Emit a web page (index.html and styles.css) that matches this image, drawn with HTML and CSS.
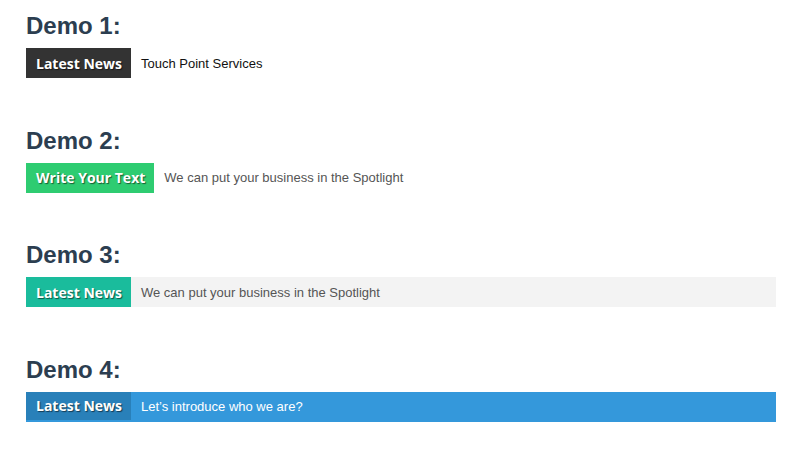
FILE: index.html
```html
<!DOCTYPE html>
<html>
<head>
<meta charset="utf-8">
<link rel="stylesheet" href="styles.css">
</head>
<body>
<div class="page">
  <section class="demo">
    <h2 class="title">Demo 1:</h2>
    <div class="ticker">
      <span class="label label-dark">Latest News</span>
      <span class="text text-black">Touch Point Services</span>
    </div>
  </section>
  <section class="demo">
    <h2 class="title">Demo 2:</h2>
    <div class="ticker">
      <span class="label label-green">Write Your Text</span>
      <span class="text">We can put your business in the Spotlight</span>
    </div>
  </section>
  <section class="demo">
    <h2 class="title">Demo 3:</h2>
    <div class="ticker ticker-grey">
      <span class="label label-teal">Latest News</span>
      <span class="text">We can put your business in the Spotlight</span>
    </div>
  </section>
  <section class="demo">
    <h2 class="title">Demo 4:</h2>
    <div class="ticker ticker-blue">
      <span class="label label-blue">Latest News</span>
      <span class="text text-white">Let’s introduce who we are?</span>
    </div>
  </section>
</div>
</body>
</html>
```
FILE: styles.css
```css
html, body {
  margin: 0;
  padding: 0;
  background: #ffffff;
}
.page {
  padding: 12px 26px 0 26px;
  width: 750px;
}
.demo {
  margin-bottom: 48.6px;
}
.title {
  margin: 0 0 8px 0;
  font-family: "Liberation Sans", Arial, sans-serif;
  font-weight: bold;
  font-size: 24px;
  line-height: 28px;
  color: #2c3e50;
}
.ticker {
  display: flex;
  align-items: flex-start;
  height: 30px;
  width: 750px;
}
.ticker-grey {
  background: #f3f3f3;
}
.ticker-blue {
  background: #3498db;
}
.label {
  display: flex;
  align-items: center;
  height: 30px;
  padding: 0 9px 0 10px;
  font-family: "Open Sans", sans-serif;
  font-weight: bold;
  font-size: 14px;
  color: #ffffff;
  text-shadow: 1px 1px 1px rgba(0,0,0,0.55);
  white-space: nowrap;
}
.label-dark { background: #333333; }
.label-green { background: #2ecc71; }
.label-teal { background: #1abc9c; }
.label-blue { background: #2980b9; height: 28px; }
.text {
  display: flex;
  align-items: center;
  height: 30px;
  padding-left: 10px;
  font-family: "Liberation Sans", Arial, sans-serif;
  font-size: 13px;
  color: #555555;
  white-space: nowrap;
}
.text-black { color: #111111; }
.text-white { color: #ffffff; }
```
